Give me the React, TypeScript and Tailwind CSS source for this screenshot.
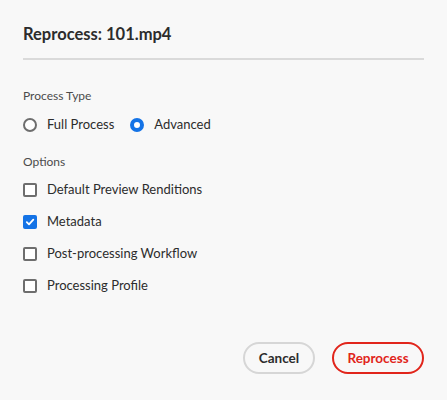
import React, { useState } from 'react';

const font = { fontFamily: 'Lato, "Open Sans", Arial, sans-serif' };

const Radio: React.FC<{ checked: boolean; label: string; onClick: () => void }> = ({ checked, label, onClick }) => (
  <button type="button" onClick={onClick} className="flex items-center h-8 mr-[16px]">
    {checked ? (
      <span className="w-[14px] h-[14px] rounded-full border-[4px] border-[#1473e6] bg-white" />
    ) : (
      <span className="w-[14px] h-[14px] rounded-full border-2 border-[#6e6e6e] bg-white" />
    )}
    <span className="ml-[10px] text-[13px] text-[#2c2c2c]">{label}</span>
  </button>
);

const Checkbox: React.FC<{ checked: boolean; label: string; onClick: () => void }> = ({ checked, label, onClick }) => (
  <button type="button" onClick={onClick} className="flex items-center h-8">
    {checked ? (
      <span className="w-[14px] h-[14px] rounded-[2px] bg-[#1473e6] flex items-center justify-center">
        <svg width="10" height="10" viewBox="0 0 10 10" fill="none">
          <path d="M1.8 5.2 4 7.4 8.3 2.6" stroke="white" strokeWidth="1.8" strokeLinecap="round" strokeLinejoin="round" />
        </svg>
      </span>
    ) : (
      <span className="w-[14px] h-[14px] rounded-[2px] border-2 border-[#6e6e6e] bg-white" />
    )}
    <span className="ml-[10px] text-[13px] text-[#2c2c2c]">{label}</span>
  </button>
);

export default function App() {
  const [type, setType] = useState<'full' | 'advanced'>('advanced');
  const [opts, setOpts] = useState({ preview: false, metadata: true, workflow: false, profile: false });

  const toggle = (k: keyof typeof opts) => setOpts((o) => ({ ...o, [k]: !o[k] }));

  return (
    <div className="w-[447px] h-[400px] bg-[#f8f8f8] px-[23px] flex flex-col" style={font}>
      <h2 className="pt-[23px] text-[16.5px] leading-[22px] font-bold text-[#2c2c2c]">Reprocess: 101.mp4</h2>
      <div className="mt-[13px] h-[2px] bg-[#dadada]" />

      <div className="mt-[28px] text-[12px] leading-4 text-[#4b4b4b]">Process Type</div>
      <div className="mt-[5px] flex">
        <Radio checked={type === 'full'} label="Full Process" onClick={() => setType('full')} />
        <Radio checked={type === 'advanced'} label="Advanced" onClick={() => setType('advanced')} />
      </div>

      <div className="mt-[13px] text-[12px] leading-4 text-[#4b4b4b]">Options</div>
      <div className="mt-[4px] flex flex-col">
        <Checkbox checked={opts.preview} label="Default Preview Renditions" onClick={() => toggle('preview')} />
        <Checkbox checked={opts.metadata} label="Metadata" onClick={() => toggle('metadata')} />
        <Checkbox checked={opts.workflow} label="Post-processing Workflow" onClick={() => toggle('workflow')} />
        <Checkbox checked={opts.profile} label="Processing Profile" onClick={() => toggle('profile')} />
      </div>

      <div className="mt-auto pb-[26px] flex justify-end gap-[17px]">
        <button type="button" className="h-8 w-[72px] rounded-full border-2 border-[#d6d6d6] text-[13.5px] font-bold text-[#2c2c2c]">
          Cancel
        </button>
        <button type="button" className="h-8 w-[92px] rounded-full border-2 border-[#e1251b] text-[13.5px] font-bold text-[#e1251b]">
          Reprocess
        </button>
      </div>
    </div>
  );
}
